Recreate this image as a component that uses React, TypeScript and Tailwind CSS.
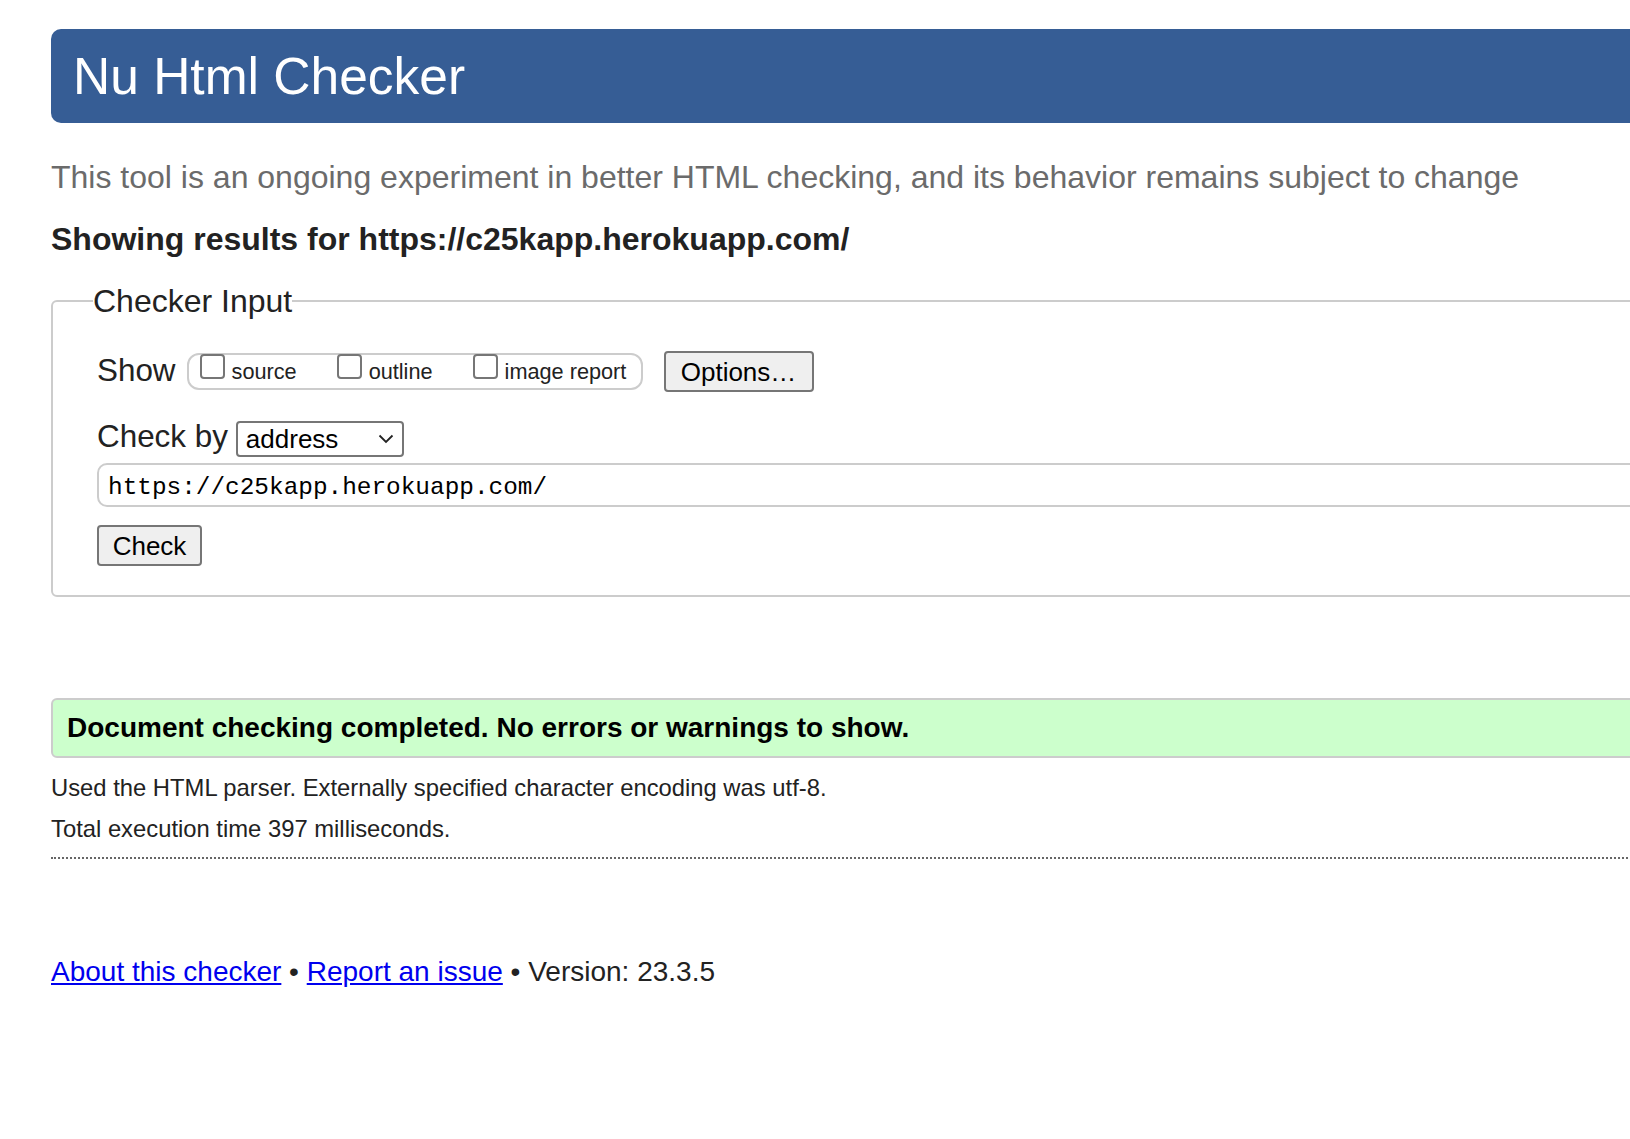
import React from "react";

const sans = { fontFamily: '"Liberation Sans", Arial, sans-serif' };

function Box() {
  return <span className="block w-[25px] h-[25px] shrink-0 rounded-[4px] border-2 border-[#767676] bg-white" />;
}

function Option({ label }: { label: string }) {
  return (
    <label className="flex items-start gap-[7px]">
      <span className="-mt-px">
        <Box />
      </span>
      <span className="mt-[2px] text-[21.7px] leading-[30px] text-[#222]">{label}</span>
    </label>
  );
}

export default function App() {
  return (
    <div className="w-[1630px] h-[1139px] overflow-hidden bg-white" style={sans}>
      <div className="w-[1700px] pl-[51px] pt-[29px]">
        <h1 className="h-[94px] rounded-[10px] bg-[#365d95] pl-[22px] text-[51.5px] leading-[95px] font-normal text-white">
          Nu Html Checker
        </h1>

        <p className="mt-[34px] text-[32px] leading-[40px] text-[#6b6b6b]">
          This tool is an ongoing experiment in better HTML checking, and its behavior remains subject to change
        </p>
        <p className="mt-[22px] text-[32px] leading-[40px] font-bold text-[#222]">
          Showing results for https://c25kapp.herokuapp.com/
        </p>

        <fieldset className="mt-[22px] rounded-[6px] border-2 border-[#cccccc] pl-[44px] pt-[28px] pb-[29px]">
          <legend className="-ml-[4px] text-[32px] leading-[40px] text-[#222]">Checker Input</legend>

          <div className="flex items-start">
            <span className="mt-[2px] text-[31.4px] leading-[40px] text-[#222]">Show</span>
            <div className="ml-[11px] mt-[4px] flex h-[37px] w-[456px] items-start gap-[40px] rounded-[12px] border-2 border-[#cccccc] pl-[11px]">
              <Option label="source" />
              <Option label="outline" />
              <Option label="image report" />
            </div>
            <button className="ml-[21px] mt-[2px] h-[41px] w-[150px] rounded-[4px] border-2 border-[#767676] bg-[#efefef] text-[26px] leading-none text-black">
              Options…
            </button>
          </div>

          <div className="mt-[25px] flex items-start">
            <span className="text-[31.4px] leading-[40px] text-[#222]">Check by</span>
            <div className="ml-[8px] mt-[4px] flex h-[36px] w-[168px] items-center justify-between rounded-[4px] border-2 border-[#767676] bg-white pl-[8px] pr-[8px]">
              <span className="text-[26px] leading-[32px] text-black">address</span>
              <svg width="16" height="10" viewBox="0 0 16 10" fill="none">
                <polyline points="1.5,1.5 8,8 14.5,1.5" stroke="#222" strokeWidth="1.8" />
              </svg>
            </div>
          </div>

          <div className="mt-[6px] h-[44px] w-[1560px] rounded-[10px] border-2 border-[#cccccc] pl-[9px]">
            <span
              className="mt-[6px] block text-[24.4px] leading-[34px] text-black"
              style={{ fontFamily: '"Liberation Mono", "DejaVu Sans Mono", monospace' }}
            >
              https://c25kapp.herokuapp.com/
            </span>
          </div>

          <button className="mt-[18px] block h-[41px] w-[105px] rounded-[4px] border-2 border-[#767676] bg-[#efefef] text-[26px] leading-none text-black">
            Check
          </button>
        </fieldset>

        <div className="mt-[101px] h-[60px] rounded-[6px] border-2 border-[#cccccc] bg-[#ccffcc] pl-[14px] pt-[8px]">
          <p className="text-[28px] leading-[40px] font-bold text-black">
            Document checking completed. No errors or warnings to show.
          </p>
        </div>

        <p className="mt-[9px] text-[23.8px] leading-[41px] text-[#222]">
          Used the HTML parser. Externally specified character encoding was utf-8.
        </p>
        <p className="text-[23.8px] leading-[41px] text-[#222]">Total execution time 397 milliseconds.</p>
        <div className="mt-[8px] border-t-2 border-dotted border-[#666]" />

        <p className="mt-[93px] text-[28px] leading-[40px] text-[#222]">
          <a href="#" className="text-[#0000ee] underline">About this checker</a>
          {" • "}
          <a href="#" className="text-[#0000ee] underline">Report an issue</a>
          {" • Version: 23.3.5"}
        </p>
      </div>
    </div>
  );
}
